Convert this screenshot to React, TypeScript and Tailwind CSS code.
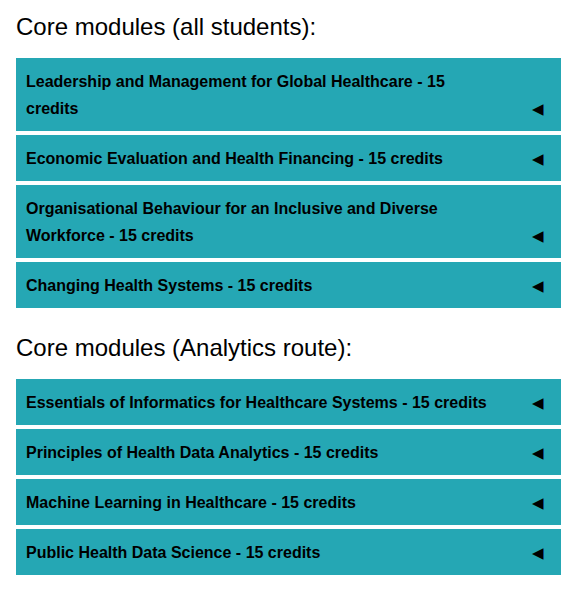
const allStudents = [
  "Leadership and Management for Global Healthcare - 15 credits",
  "Economic Evaluation and Health Financing - 15 credits",
  "Organisational Behaviour for an Inclusive and Diverse Workforce - 15 credits",
  "Changing Health Systems - 15 credits",
];

const analytics = [
  "Essentials of Informatics for Healthcare Systems - 15 credits",
  "Principles of Health Data Analytics - 15 credits",
  "Machine Learning in Healthcare - 15 credits",
  "Public Health Data Science - 15 credits",
];

function ModuleRow({ title }: { title: string }) {
  return (
    <div className="flex items-end bg-[#25a7b4] pl-[10px] pr-[17px] pt-[10px] pb-[9px]">
      <span className="w-[470px] text-[16px] font-bold leading-[27px] text-black">{title}</span>
      <span className="ml-auto text-[15px] leading-[27px] text-black">◀</span>
    </div>
  );
}

function Section({ heading, items }: { heading: string; items: string[] }) {
  return (
    <section>
      <h2 className="text-[24px] leading-[28px] pt-[13px] pb-[17px] text-black">{heading}</h2>
      <div className="flex flex-col gap-[4px]">
        {items.map((m) => (
          <ModuleRow key={m} title={m} />
        ))}
      </div>
    </section>
  );
}

export default function App() {
  return (
    <div className="w-[583px] h-[593px] bg-white pl-[16px] pr-[22px]" style={{ fontFamily: '"Liberation Sans", Arial, sans-serif' }}>
      <Section heading="Core modules (all students):" items={allStudents} />
      <div className="h-[13px]" />
      <Section heading="Core modules (Analytics route):" items={analytics} />
    </div>
  );
}
